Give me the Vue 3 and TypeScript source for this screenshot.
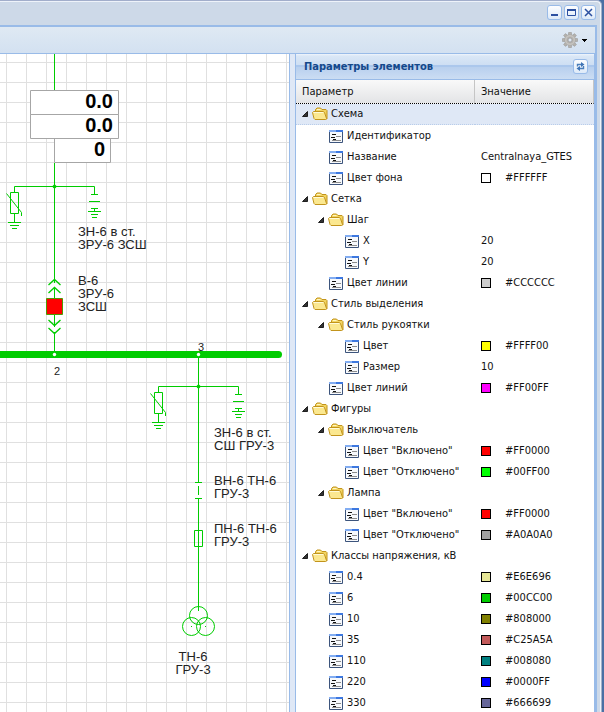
<script setup lang="ts">
interface Param {
  name: string
  depth: number
  folder?: boolean
  value?: string
  color?: string
}

const params: Param[] = [
  { name: 'Схема', depth: 0, folder: true },
  { name: 'Идентификатор', depth: 1 },
  { name: 'Название', depth: 1, value: 'Centralnaya_GTES' },
  { name: 'Цвет фона', depth: 1, color: '#FFFFFF' },
  { name: 'Сетка', depth: 0, folder: true },
  { name: 'Шаг', depth: 1, folder: true },
  { name: 'X', depth: 2, value: '20' },
  { name: 'Y', depth: 2, value: '20' },
  { name: 'Цвет линии', depth: 1, color: '#CCCCCC' },
  { name: 'Стиль выделения', depth: 0, folder: true },
  { name: 'Стиль рукоятки', depth: 1, folder: true },
  { name: 'Цвет', depth: 2, color: '#FFFF00' },
  { name: 'Размер', depth: 2, value: '10' },
  { name: 'Цвет линий', depth: 1, color: '#FF00FF' },
  { name: 'Фигуры', depth: 0, folder: true },
  { name: 'Выключатель', depth: 1, folder: true },
  { name: 'Цвет "Включено"', depth: 2, color: '#FF0000' },
  { name: 'Цвет "Отключено"', depth: 2, color: '#00FF00' },
  { name: 'Лампа', depth: 1, folder: true },
  { name: 'Цвет "Включено"', depth: 2, color: '#FF0000' },
  { name: 'Цвет "Отключено"', depth: 2, color: '#A0A0A0' },
  { name: 'Классы напряжения, кВ', depth: 0, folder: true },
  { name: '0.4', depth: 1, color: '#E6E696' },
  { name: '6', depth: 1, color: '#00CC00' },
  { name: '10', depth: 1, color: '#808000' },
  { name: '35', depth: 1, color: '#C25A5A' },
  { name: '110', depth: 1, color: '#008080' },
  { name: '220', depth: 1, color: '#0000FF' },
  { name: '330', depth: 1, color: '#666699' },
]

const teeth = [0, 45, 90, 135, 180, 225, 270, 315]
</script>

<template>
  <div class="desktop">
    <main class="window">
      <header class="titlebar">
        <button class="tool" type="button" aria-label="Свернуть">
          <svg width="15" height="15" viewBox="0 0 15 15"><path d="M4 9h7v2H4z" fill="#2b4fa0" /></svg>
        </button>
        <button class="tool" type="button" aria-label="Развернуть">
          <svg width="15" height="15" viewBox="0 0 15 15"><path d="M3.500 4.500h8v6h-8z" fill="none" stroke="#2b4fa0" /><path d="M3 4h9v2H3z" fill="#2b4fa0" /></svg>
        </button>
        <button class="tool" type="button" aria-label="Закрыть">
          <svg width="15" height="15" viewBox="0 0 15 15"><path d="M4 4l7 7M11 4l-7 7" stroke="#2b4fa0" stroke-width="1.500" /></svg>
        </button>
      </header>

      <div class="body">
        <div class="toolbar">
          <button class="menu" type="button" aria-label="Настройки">
            <svg width="16" height="16" viewBox="0 0 16 16">
              <g fill="#b4b2ae" stroke="#94928e" stroke-width="0.500">
                <rect v-for="a in teeth" :key="a" x="6.500" y="0.300" width="3" height="4" rx="0.500" :transform="`rotate(${a} 8 8)`" />
              </g>
              <circle cx="8" cy="8" r="5.500" fill="#c6c4c0" stroke="#a3a19d" stroke-width="0.600" />
              <circle cx="8" cy="8" r="3.500" fill="#b4b2ae" />
              <circle cx="8" cy="8" r="2" fill="#dde7f2" stroke="#989898" stroke-width="0.700" />
            </svg>
            <svg width="5" height="3" viewBox="0 0 5 3"><path d="M0 0h5v1H4v1H3v1H2V2H1V1H0z" fill="#000" /></svg>
          </button>
        </div>

        <div class="content">
          <section class="canvas">
            <svg width="289" height="658" viewBox="0 54 289 658">
              <defs>
                <g id="branch" fill="none" stroke="#00cc00">
                  <path d="M14.500 192V186.500H94.500V194M10.500 192.500h8v21h-8zM6.500 193.500L21.500 212.500V216M14.500 214v8M8 222.500h13M10 225.500h9M12 228.500h5" />
                  <path d="M91 194.500h7M89 201.500h11M91 208.500h7M94.500 208v3M88 211.500h13M91 214.500h7M92 217.500h5" />
                  <circle cx="54.500" cy="186.500" r="1.500" fill="#00cc00" />
                </g>
              </defs>

              <g fill="none" stroke="#00cc00">
                <path d="M54.500 54V90M54.500 163V283M54.500 287V298M54.500 315V327M54.500 332V352" />
                <path d="M48.500 285l6-5.500 6 5.500M48.500 293l6-5.500 6 5.500M48.500 320l6 5.500 6-5.500M48.500 328l6 5.500 6-5.500" stroke-width="1.300" />
                <path d="M198.500 358V482M195 482.500h7M198.500 486V495M195 498.500h7M198.500 498V611M194.500 530.500h8v16h-8z" />
                <circle cx="198.500" cy="615.500" r="9" />
                <circle cx="191.500" cy="626.500" r="9" />
                <circle cx="205.500" cy="626.500" r="9" />
              </g>
              <path d="M191 626h1v1h-1zM205 626h1v1h-1z" fill="#00cc00" />
              <use href="#branch" />
              <use href="#branch" transform="translate(144 200)" />

              <path d="M30.500 90.500h88v24h-88zM30.500 114.500h88v24h-88zM54.500 138.500h56v24h-56z" fill="#fff" stroke="#a6a6a6" />
              <g class="reading" text-anchor="end">
                <text x="113" y="108">0.0</text>
                <text x="113" y="132">0.0</text>
                <text x="105" y="156">0</text>
              </g>

              <path d="M46.500 298.500h16v16h-16z" fill="#f00" stroke="#4e9a00" />
              <path d="M-4 354.500H278.500" stroke="#00cc00" stroke-width="7" stroke-linecap="round" />
              <circle cx="54.500" cy="354.500" r="1.700" fill="#fff" />
              <circle cx="198.500" cy="354.500" r="1.700" fill="#fff" />

              <g class="mark">
                <text x="54" y="375">2</text>
                <text x="198" y="351">3</text>
              </g>
              <g class="label">
                <text x="78" y="236">ЗН-6 в ст.</text>
                <text x="78" y="249">ЗРУ-6 ЗСШ</text>
                <text x="78" y="285">В-6</text>
                <text x="78" y="298">ЗРУ-6</text>
                <text x="78" y="311">ЗСШ</text>
                <text x="214" y="437">ЗН-6 в ст.</text>
                <text x="214" y="450">СШ ГРУ-3</text>
                <text x="214" y="485">ВН-6 ТН-6</text>
                <text x="214" y="498">ГРУ-3</text>
                <text x="214" y="533">ПН-6 ТН-6</text>
                <text x="214" y="546">ГРУ-3</text>
                <text x="193" y="661" text-anchor="middle">ТН-6</text>
                <text x="193" y="674" text-anchor="middle">ГРУ-3</text>
              </g>
            </svg>
          </section>

          <aside class="panel">
            <div class="panel-head">
              <h2>Параметры элементов</h2>
              <button class="tool" type="button" aria-label="Обновить">
                <svg width="15" height="15" viewBox="0 0 15 15">
                  <path d="M4.500 7.500V5.500h4M10.500 7v2.500h-4" fill="none" stroke="#4a7ebb" stroke-width="1.400" />
                  <path d="M8 3l3.500 2.500L8 8zM7 7L3.500 9.500 7 12z" fill="#3f74b5" />
                </svg>
              </button>
            </div>
            <table>
              <colgroup><col class="col-name"><col></colgroup>
              <thead>
                <tr><th scope="col">Параметр</th><th scope="col">Значение</th></tr>
              </thead>
              <tbody>
                <tr v-for="(p, i) in params" :key="i" :class="{ selected: i === 0 }">
                  <td>
                    <div class="node" :class="`depth-${p.depth}`">
                      <span class="expander">
                        <svg v-if="p.folder" width="6" height="6" viewBox="0 0 6 6"><path d="M5.500 0.500v5H0.500z" fill="#333" stroke="#111" stroke-width="0.900" /></svg>
                      </span>
                      <svg v-if="p.folder" class="icon" width="16" height="16" viewBox="0 0 16 16">
                        <path d="M3.500 12V3.500l1.500-1.500h3.500l1.500 1.500h4l1 1v8.500z" fill="#f2d461" stroke="#c2941c" />
                        <path d="M5 3.500h3.500" stroke="#fff6c4" />
                        <path d="M0.500 6.500l1-1h9.500l1.500 1 2 6-1 1H3l-1-1z" fill="#fbe890" stroke="#c2941c" />
                        <path d="M1.500 6.500h10" stroke="#fffbd8" />
                      </svg>
                      <svg v-else class="icon" width="16" height="16" viewBox="0 0 16 16">
                        <path d="M1.500 2.500h13v12h-13z" fill="#f7f9fc" stroke="#3c547c" />
                        <path d="M1 2h14v2H1z" fill="#3d78e0" />
                        <path d="M1 2h7v2H1z" fill="#82adf2" />
                        <path d="M4 6.500h4M3 9.500h4M5 11.500h3" stroke="#111" />
                        <path d="M8 8.500h5M4 12.500h9" stroke="#8c8c8c" />
                      </svg>
                      <span class="name">{{ p.name }}</span>
                    </div>
                  </td>
                  <td>
                    <div v-if="p.color" class="value">
                      <span class="swatch" :style="{ backgroundColor: p.color }"></span>{{ p.color }}
                    </div>
                    <div v-else class="value">{{ p.value }}</div>
                  </td>
                </tr>
              </tbody>
            </table>
          </aside>
        </div>
      </div>
    </main>
  </div>
</template>

<style>
body {
  margin: 0;
}
</style>

<style scoped>
* {
  box-sizing: border-box;
}

.desktop {
  height: 100vh;
  padding-right: 2px;
  overflow: hidden;
  background: #4a70a4;
  font-family: "DejaVu Sans Condensed", "DejaVu Sans", sans-serif;
  font-size: 11px;
  line-height: 14px;
  color: #111;
}

.window {
  display: flex;
  flex-direction: column;
  height: 100%;
  padding-right: 4px;
  background: #cdd9e8;
  border-top: 1px solid #a2aecb;
  border-right: 1px solid #a2b1c9;
  border-top-right-radius: 5px;
  box-shadow: inset -1px 1px 0 #eef3fa;
}

.titlebar {
  display: flex;
  justify-content: flex-end;
  gap: 2px;
  height: 24px;
  padding: 4px 1px 0 0;
}

.tool {
  display: block;
  width: 15px;
  height: 15px;
  padding: 0;
  border: 0;
  border-radius: 3px;
  background: linear-gradient(#fff, #dbe8f8);
  box-shadow: inset 0 0 0 1px #99bbe8;
}

.tool svg {
  display: block;
}

.body {
  display: flex;
  flex: 1;
  flex-direction: column;
  min-height: 0;
  border-top: 2px solid #99bbe8;
  border-right: 2px solid #99bbe8;
}

.toolbar {
  display: flex;
  flex: none;
  align-items: center;
  justify-content: flex-end;
  height: 27px;
  padding-right: 8px;
  background: linear-gradient(#dfe9f3, #d3e1f1);
  border-bottom: 1px solid #99bbe8;
}

.menu {
  display: flex;
  gap: 4px;
  align-items: center;
  padding: 0;
  background: none;
  border: 0;
}

.content {
  display: flex;
  flex: 1;
  gap: 5px;
  min-height: 0;
  background: #dfe8f6;
}

.canvas {
  flex: 1;
  min-width: 0;
  overflow: hidden;
  background-color: #fff;
  background-image: linear-gradient(90deg, #e0e0e0 1px, transparent 1px), linear-gradient(#e0e0e0 1px, transparent 1px);
  background-position: 6px 8px;
  background-size: 20px 20px;
  border-right: 1px solid #99bbe8;
}

.canvas svg {
  display: block;
}

.canvas text {
  font-family: "Liberation Sans", Arial, sans-serif;
  fill: #222;
}

.canvas .reading text {
  font-size: 20px;
  font-weight: bold;
  fill: #000;
}

.label text {
  font-size: 13px;
}

.mark text {
  font-size: 11px;
}

.panel {
  flex: none;
  width: 300px;
  overflow: hidden;
  background: #fff;
  border-right: 1px solid #99bbe8;
  border-left: 1px solid #99bbe8;
}

.panel-head {
  display: flex;
  align-items: center;
  justify-content: space-between;
  height: 26px;
  padding: 0 6px 0 8px;
  background: linear-gradient(#f0f5fc 0, #dae7f6 2px, #cddef3 45%, #abc7ec 46%, #abc7ec 50%, #b8cfee 51%, #cbddf3 100%);
  border-bottom: 1px solid #99bbe8;
}

.panel-head h2 {
  margin: 0;
  color: #15498b;
  font-size: 11px;
  font-weight: bold;
}

table {
  width: 100%;
  border-spacing: 0;
  table-layout: fixed;
}

.col-name {
  width: 179px;
}

th {
  height: 24px;
  padding: 0 6px;
  font-weight: normal;
  text-align: left;
  background: linear-gradient(#f9f9f9, #e3e4e6);
  border-right: 1px solid #c5c5c5;
  border-bottom: 1px dotted #000;
}

td {
  height: 21px;
  padding: 0;
}

.selected td {
  background: #dfe8f6;
  border-bottom: 1px dotted #b9cdea;
}

.node {
  display: flex;
  align-items: center;
  height: 20px;
  white-space: nowrap;
}

.depth-0 {
  padding-left: 6px;
}

.depth-1 {
  padding-left: 22px;
}

.depth-2 {
  padding-left: 38px;
}

.expander {
  display: flex;
  width: 10px;
}

.icon {
  flex: none;
  margin-right: 3px;
}

.value {
  display: flex;
  gap: 14px;
  align-items: center;
  height: 20px;
  padding-left: 6px;
}

.swatch {
  width: 10px;
  height: 10px;
  border: 1px solid #000;
}
</style>
